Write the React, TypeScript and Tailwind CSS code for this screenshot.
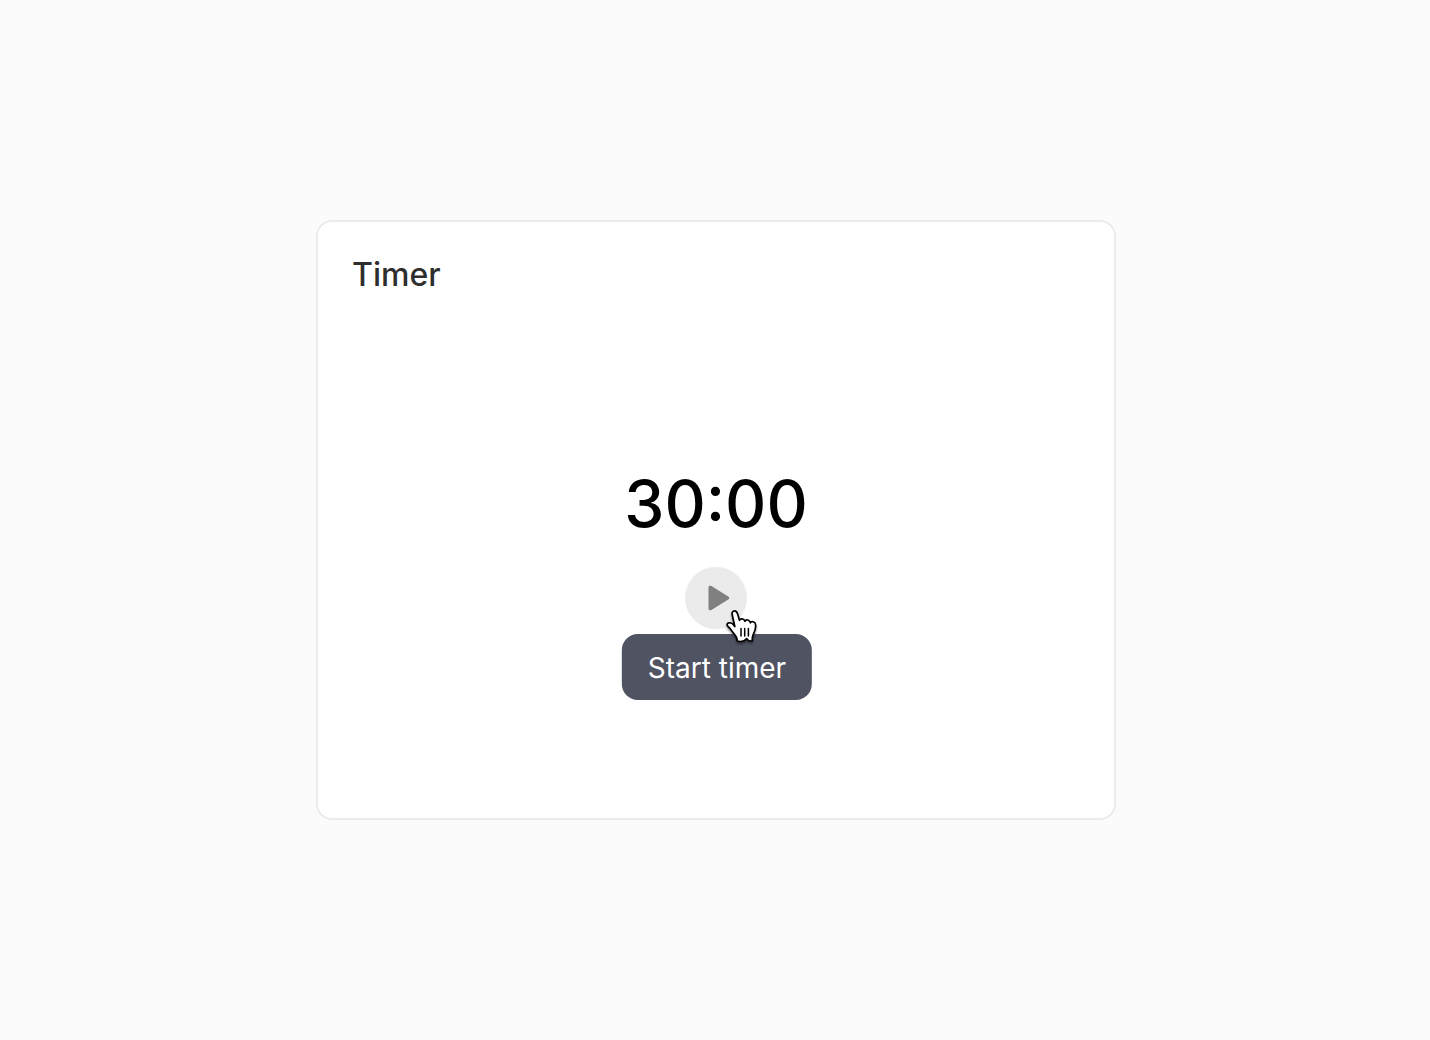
export default function App() {
  return (
    <main className="flex min-h-screen items-center justify-center bg-[#fbfbfb] pl-[2px] font-[Inter,sans-serif]">
      <section aria-labelledby="timer-title" className="flex min-h-[600px] w-full max-w-[800px] flex-col rounded-2xl border-2 border-[#ebebef] bg-white px-[34px] py-8">
        <h1 id="timer-title" className="text-[32px] font-medium leading-[42px] text-[#2e2e2e]">Timer</h1>
        <div className="flex flex-col items-center pt-[168px]">
          <time className="text-[64px] font-medium leading-[80px] text-black">30:00</time>
          <div className="relative mt-[23px]">
            <button type="button" aria-describedby="start-tip" aria-label="Start timer" className="flex size-[62px] cursor-pointer items-center justify-center rounded-full bg-[#ebebeb]">
              <svg className="ml-[5px]" width="22" height="26" viewBox="0 0 22 26" fill="#808080" aria-hidden="true">
                <path d="M0.5 2.6V23.4C.5 25.2 2 25.7 3.4 24.9L20.3 14.5C21.7 13.7 21.7 12.3 20.3 11.5L3.4 1.1C2 .3.5.8.5 2.6Z" />
              </svg>
            </button>
            <div id="start-tip" role="tooltip" className="absolute left-1/2 top-[67px] ml-px -translate-x-1/2 whitespace-nowrap rounded-2xl bg-[#505362] px-[26px] pb-3 pt-[14px] text-[28px] leading-10 text-white">Start timer</div>
            <svg className="pointer-events-none absolute left-[39px] top-[40px] drop-shadow-[0_2px_1px_rgba(0,0,0,0.4)]" width="36" height="38" viewBox="0 0 36 38" aria-hidden="true">
              <path d="M10.8 19.5 8.5 9C7.7 6.2 8 4.5 9.9 4C11.9 3.5 13 4.8 13.7 7.2L15.5 13.3C16 11.3 20 11.2 21 14.3C22 12 25.7 12.7 26.4 15.8C27.2 13.8 31.3 14.2 31.6 17.8C32 21.4 30.8 24.5 29.3 27.3C28.1 29.6 28.2 31.5 28.2 34C26.3 34.5 24.5 34.2 22.8 31.6C20.8 34.3 17 35 13.2 34C13.4 30.8 11.6 28.5 9.6 26.3C7.4 23.8 6.5 21.6 4.2 19.6C2.7 18.2 2.6 16.2 4.8 15.8C7 15.4 9.1 16.9 10.8 19.5Z" fill="white" stroke="black" strokeWidth="1.7" strokeLinejoin="round" />
              <path d="M17 21.5V29M20.7 21.5V29M24.4 21.5V29" stroke="black" strokeWidth="1.5" strokeLinecap="round" />
            </svg>
          </div>
        </div>
      </section>
    </main>
  );
}
